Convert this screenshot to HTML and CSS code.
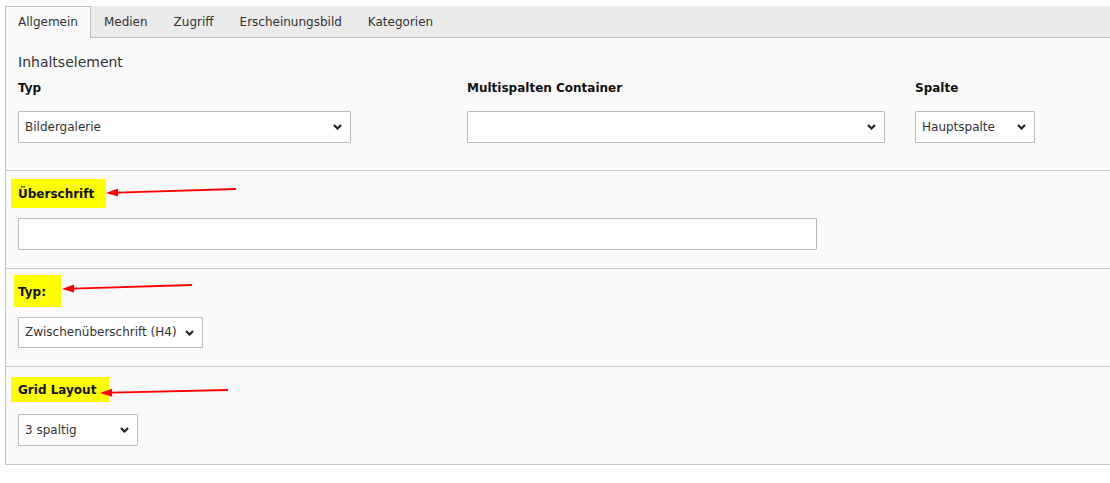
FILE: index.html
```html
<!DOCTYPE html>
<html lang="de">
<head>
  <meta charset="UTF-8">
  <meta name="viewport" content="width=device-width, initial-scale=1.0">
  <title>Inhaltselement bearbeiten</title>
  <link rel="stylesheet" href="styles.css">
</head>
<body>
  <div class="editor">
    <!-- Tabs -->
    <ul class="tabs">
      <li class="tab active">Allgemein</li>
      <li class="tab">Medien</li>
      <li class="tab">Zugriff</li>
      <li class="tab">Erscheinungsbild</li>
      <li class="tab">Kategorien</li>
    </ul>

    <div class="panel">
      <!-- Inhaltselement -->
      <div class="section section-first">
        <h2 class="section-title">Inhaltselement</h2>
        <div class="row">
          <div class="field field-type">
            <label class="label">Typ</label>
            <div class="select select-type">
              <span>Bildergalerie</span>
              <svg class="chevron" width="9" height="6" viewBox="0 0 9 6"><path d="M1 1 L4.5 4.5 L8 1" /></svg>
            </div>
          </div>
          <div class="field field-container">
            <label class="label">Multispalten Container</label>
            <div class="select select-container">
              <span></span>
              <svg class="chevron" width="9" height="6" viewBox="0 0 9 6"><path d="M1 1 L4.5 4.5 L8 1" /></svg>
            </div>
          </div>
          <div class="field field-column">
            <label class="label">Spalte</label>
            <div class="select select-small">
              <span>Hauptspalte</span>
              <svg class="chevron" width="9" height="6" viewBox="0 0 9 6"><path d="M1 1 L4.5 4.5 L8 1" /></svg>
            </div>
          </div>
        </div>
      </div>

      <!-- Überschrift -->
      <div class="section">
        <label class="label mark mark-header">Überschrift</label>
        <div class="input input-header"></div>
      </div>

      <!-- Typ -->
      <div class="section">
        <label class="label mark mark-typ">Typ:</label>
        <div class="select select-layout">
          <span>Zwischenüberschrift (H4)</span>
          <svg class="chevron" width="9" height="6" viewBox="0 0 9 6"><path d="M1 1 L4.5 4.5 L8 1" /></svg>
        </div>
      </div>

      <!-- Grid Layout -->
      <div class="section">
        <label class="label mark mark-grid">Grid Layout</label>
        <div class="select select-small">
          <span>3 spaltig</span>
          <svg class="chevron" width="9" height="6" viewBox="0 0 9 6"><path d="M1 1 L4.5 4.5 L8 1" /></svg>
        </div>
      </div>
    </div>
  </div>

  <!-- annotation arrows -->
  <svg class="arrows" width="1110" height="483" viewBox="0 0 1110 483">
    <line x1="236" y1="189" x2="117" y2="192.6" />
    <polygon points="106,193 118.1,196.6 117.9,188.6" />
    <line x1="192" y1="285" x2="73" y2="288.6" />
    <polygon points="62,289 74.1,292.6 73.9,284.6" />
    <line x1="228" y1="390" x2="111" y2="392.7" />
    <polygon points="100,393 112.1,396.7 111.9,388.7" />
  </svg>
</body>
</html>
```

FILE: styles.css
```css
/* General */
body {
  margin: 0;
  background-color: #fff;
  font-family: "DejaVu Sans", Verdana, sans-serif;
  font-size: 12px;
  line-height: 15px;
  color: #333;
  position: relative;
}

.editor {
  margin: 6px 0 0 5px;
}

/* Tabs */
.tabs {
  display: flex;
  margin: 0;
  padding: 0;
  list-style: none;
  background-color: #ebebeb;
  border-bottom: 1px solid #c3c3c3;
}

.tab {
  padding: 8px 12px 7px;
  border: 1px solid transparent;
  border-bottom: none;
  color: #333;
}

.tab.active {
  background-color: #fafafa;
  border-color: #c3c3c3;
  margin-bottom: -1px;
  padding-bottom: 8px;
}

/* Panel */
.panel {
  background-color: #fafafa;
  border-left: 1px solid #c3c3c3;
  border-bottom: 1px solid #c8c8c8;
}

.section {
  padding: 0 12px 18px;
  border-top: 1px solid #cbcbcb;
}

.section-first {
  border-top: none;
  padding-top: 16px;
  padding-bottom: 27px;
}

.section-title {
  margin: 0 0 10px;
  font-size: 14px;
  line-height: 17px;
  font-weight: normal;
  color: #333;
}

.row {
  display: grid;
  grid-template-columns: 449px 448px 120px;
}

.label {
  display: block;
  font-weight: bold;
  color: #111;
}

.field .label {
  margin-bottom: 15px;
}

/* Highlighted labels (annotation) */
.mark {
  display: inline-block;
  background-color: #ffff00;
  margin-bottom: 10px;
}

.mark-header {
  margin-top: 8px;
  margin-left: -7px;
  padding: 8px 12px 6px 7px;
}

.mark-typ {
  margin-top: 6px;
  margin-left: -4px;
  padding: 10px 15px 7px 4px;
}

.mark-grid {
  margin-top: 10px;
  margin-left: -7px;
  padding: 6px 13px 4px 7px;
  margin-bottom: 12px;
}

/* Form controls */
.select,
.input {
  box-sizing: border-box;
  height: 32px;
  background-color: #fff;
  border: 1px solid #bbb;
  border-radius: 1px;
}

.select {
  display: flex;
  align-items: center;
  justify-content: space-between;
  padding: 0 8px 0 6px;
  color: #333;
}

.select-type { width: 333px; }
.select-container { width: 418px; }
.select-small { width: 120px; }
.select-layout { width: 185px; height: 31px; }
.input-header { width: 799px; }

.chevron path {
  fill: none;
  stroke: #222;
  stroke-width: 2.2;
}

/* Arrows */
.arrows {
  position: absolute;
  top: 0;
  left: 0;
  pointer-events: none;
}

.arrows line {
  stroke: #ff0000;
  stroke-width: 1.8;
}

.arrows polygon {
  fill: #ff0000;
}
```
